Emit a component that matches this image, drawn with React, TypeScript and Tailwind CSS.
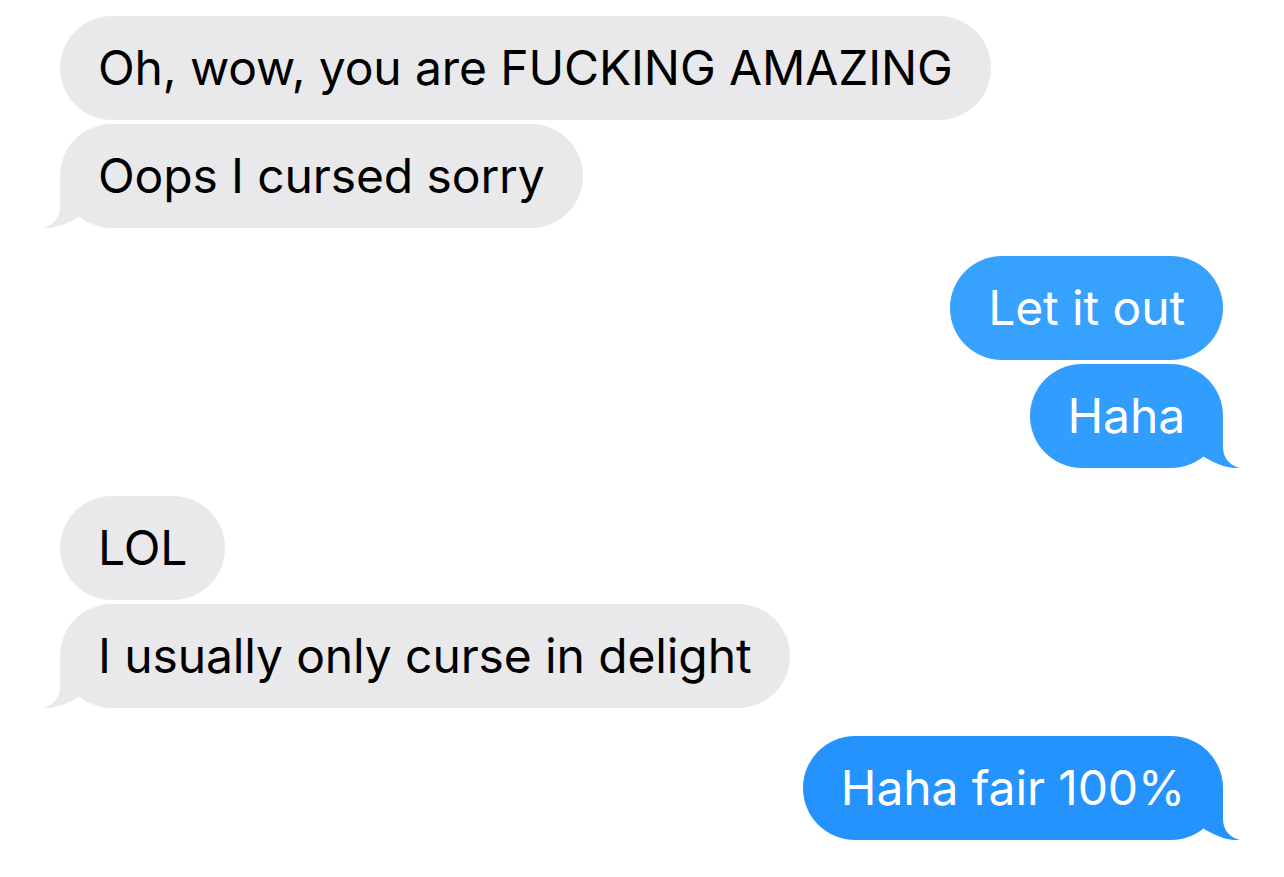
import React from 'react';

type Msg = { text: string; me: boolean; tail?: boolean; color?: string };

const groups: Msg[][] = [
  [
    { text: 'Oh, wow, you are FUCKING AMAZING', me: false },
    { text: 'Oops I cursed sorry', me: false, tail: true },
  ],
  [
    { text: 'Let it out', me: true, color: 'bg-[#36a2fe]' },
    { text: 'Haha', me: true, tail: true, color: 'bg-[#319dfe]' },
  ],
  [
    { text: 'LOL', me: false },
    { text: 'I usually only curse in delight', me: false, tail: true },
  ],
  [{ text: 'Haha fair 100%', me: true, tail: true, color: 'bg-[#2593fe]' }],
];

const colorText: Record<string, string> = {
  'bg-[#36a2fe]': 'text-[#36a2fe]',
  'bg-[#319dfe]': 'text-[#319dfe]',
  'bg-[#2593fe]': 'text-[#2593fe]',
};

// bubble tail, drawn for the left side and mirrored for the right
function Tail({ me, color }: { me: boolean; color?: string }) {
  const cls = me
    ? `absolute -right-[17px] bottom-0 -scale-x-100 ${color ? colorText[color] : ''}`
    : 'absolute -left-[17px] bottom-0 text-[#e9e9eb]';
  return (
    <svg className={cls} width="42" height="52" viewBox="0 0 42 52">
      <path d="M17,0 L17,31 C17,43 9,50 0,52 C12,53 24,48 36,41 L40,0 Z" fill="currentColor" />
    </svg>
  );
}

function Bubble({ m }: { m: Msg }) {
  const bg = m.me ? m.color : 'bg-[#e9e9eb]';
  const fg = m.me ? 'text-white' : 'text-black';
  return (
    <div className={`relative ${m.me ? 'self-end' : 'self-start'}`}>
      {m.tail && <Tail me={m.me} color={m.color} />}
      <div className={`relative h-[104px] flex items-center px-[38px] rounded-[52px] ${bg} ${fg} text-[48px] leading-none tracking-[-0.12px] whitespace-nowrap`}>
        {m.text}
      </div>
    </div>
  );
}

export default function App() {
  return (
    <div className="w-[1284px] h-[877px] bg-white overflow-hidden pt-4 pl-[60px] pr-[61px] font-['Inter','Noto_Sans',sans-serif]">
      <div className="flex flex-col gap-7">
        {groups.map((g, i) => (
          <div key={i} className="flex flex-col gap-[4px]">
            {g.map((m, j) => (
              <Bubble key={j} m={m} />
            ))}
          </div>
        ))}
      </div>
    </div>
  );
}
